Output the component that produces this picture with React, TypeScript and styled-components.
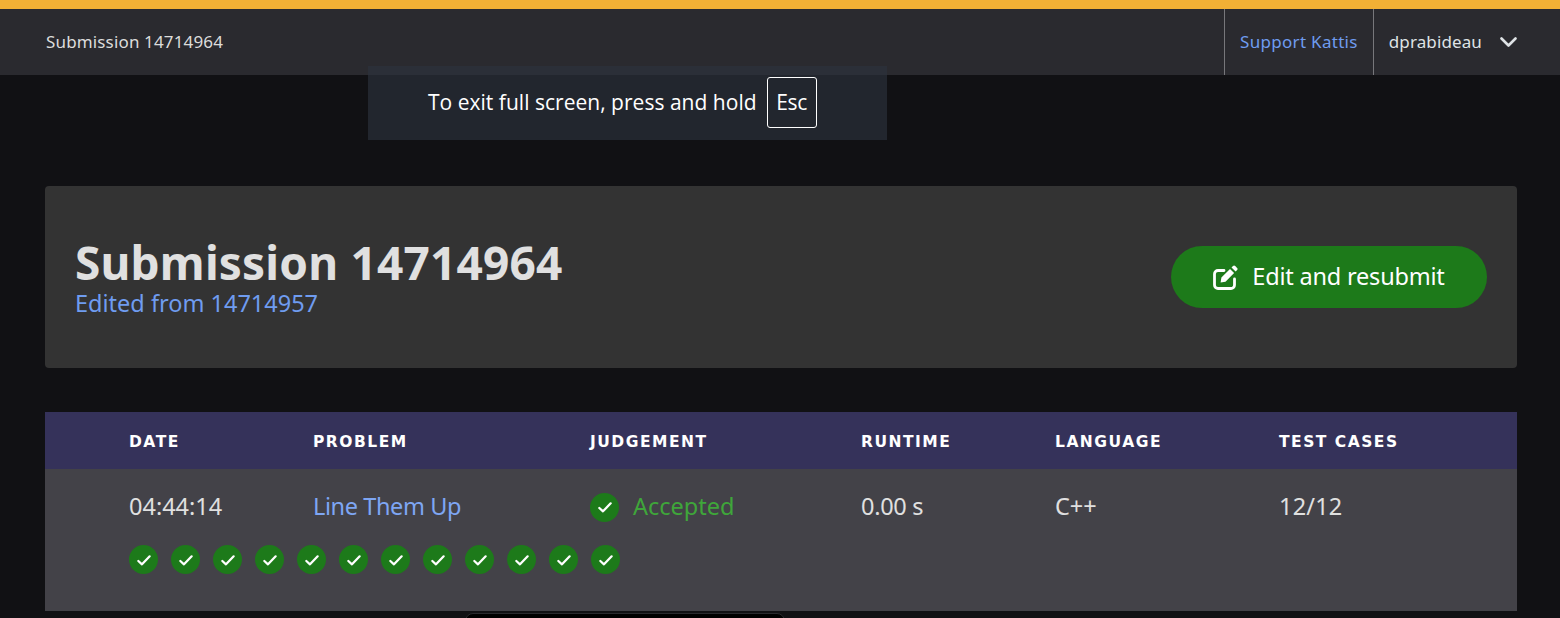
import React from "react";
import styled, { createGlobalStyle } from "styled-components";

const Global = createGlobalStyle`
  html, body { margin: 0; padding: 0; background: #111114; height: 618px; overflow: hidden; }
  #root { height: 618px; }
  * { box-sizing: border-box; }
`;

const Page = styled.div`
  position: relative;
  height: 618px;
  overflow: hidden;
  font-family: "Noto Sans", "Open Sans", sans-serif;
  color: #e0e0e0;
  background: #111114;
`;
const TopStripe = styled.div`
  height: 9px;
  background: #f2b035;
`;
const Nav = styled.nav`
  height: 66px;
  background: #2a2a2f;
  display: flex;
  align-items: center;
  justify-content: space-between;
  padding-left: 46px;
`;
const Crumb = styled.span`
  font-size: 17px;
  letter-spacing: 0.15px;
  color: #dcdcdc;
  margin-top: -2px;
`;
const NavRight = styled.div`
  display: flex;
  height: 100%;
  margin-right: 43px;
`;
const NavItem = styled.div`
  display: flex;
  align-items: center;
  gap: 18px;
  padding: 0 15px;
  font-size: 17px;
  border-left: 1px solid #77777b;
  &:last-child { padding-right: 0; }
`;
const NavLink = styled.a`
  color: #6f9cf0;
  letter-spacing: 0.3px;
  margin-top: -2px;
`;
const NavUser = styled.span`
  color: #dfe3e6;
  letter-spacing: 0.12px;
  margin-top: -2px;
`;
const Content = styled.main`
  padding: 111px 43px 0 45px;
`;
const Hero = styled.section`
  height: 182px;
  background: #333333;
  border-radius: 4px;
  display: flex;
  align-items: center;
  justify-content: space-between;
  padding: 0 30px;
`;
const HeroText = styled.div`
  display: flex;
  flex-direction: column;
`;
const Title = styled.h1`
  margin: 0;
  font-size: 46px;
  line-height: 50px;
  font-weight: 700;
  color: #e0e0e0;
  letter-spacing: 0.18px;
`;
const Subtitle = styled.a`
  margin-top: 2px;
  font-size: 23.5px;
  line-height: 28px;
  color: #6f9cf0;
`;
const ActionButton = styled.button`
  width: 316px;
  height: 62px;
  border: none;
  border-radius: 31px;
  background: #1d7a1a;
  color: #fff;
  font: inherit;
  font-size: 23.5px;
  letter-spacing: -0.2px;
  display: flex;
  align-items: center;
  justify-content: center;
  gap: 13px;
  padding: 0;
`;
const ButtonLabel = styled.span`
  margin-top: -2px;
`;
const Table = styled.section`
  margin-top: 44px;
`;
const Grid = styled.div`
  display: grid;
  grid-template-columns: 184px 277px 271px 194px 224px 1fr;
  padding-left: 84px;
`;
const HeadRow = styled(Grid)`
  height: 57px;
  padding-top: 2px;
  background: #35325a;
  align-items: center;
`;
const HeadCell = styled.div`
  font-family: "DejaVu Sans", "Noto Sans", sans-serif;
  font-size: 15.5px;
  font-weight: 700;
  letter-spacing: 1.5px;
  color: #fff;
`;
const Body = styled.div`
  height: 142px;
  background: #434248;
`;
const DataRow = styled(Grid)`
  height: 76px;
  align-items: center;
`;
const Cell = styled.div`
  font-size: 23.5px;
  color: #e0e0e0;
  display: flex;
  align-items: center;
  gap: 14px;
`;
const Value = styled.span<{ $spacing?: number }>`
  margin-top: -2px;
  letter-spacing: ${(p) => p.$spacing ?? 0}px;
`;
const ProblemLink = styled.a`
  color: #7ea6f4;
  letter-spacing: -0.4px;
  margin-top: -2px;
`;
const Accepted = styled.span`
  color: #3fa63a;
  margin-top: -2px;
`;
const Dots = styled.div`
  display: flex;
  gap: 13px;
  padding-left: 84px;
`;
const Dot = styled.span`
  width: 29px;
  height: 29px;
  border-radius: 50%;
  background: #1d7a1a;
  display: flex;
  align-items: center;
  justify-content: center;
  flex: none;
`;
const Toast = styled.div`
  position: absolute;
  left: 368px;
  top: 66px;
  width: 519px;
  height: 74px;
  background: rgba(44, 50, 61, 0.64);
  display: flex;
  align-items: center;
  gap: 10px;
  padding-left: 60px;
  font-family: "Open Sans", "Noto Sans", sans-serif;
  font-size: 21px;
  letter-spacing: 0.02px;
  color: #fff;
`;
const ToastText = styled.span`
  margin-top: -2px;
`;
const Key = styled.span`
  height: 51px;
  width: 50px;
  margin-top: -2px;
  border: 1px solid #fff;
  border-radius: 3px;
  display: flex;
  align-items: center;
  justify-content: center;
  letter-spacing: -0.3px;
`;
const Peek = styled.div`
  position: absolute;
  left: 465px;
  top: 613px;
  width: 320px;
  height: 20px;
  background: #000;
  border-radius: 8px 8px 0 0;
  border: 1px solid #2a2a2e;
`;

const Check = () => (
  <svg width="16" height="16" viewBox="0 0 24 24" fill="none" stroke="#fff" strokeWidth="3.4" strokeLinecap="round" strokeLinejoin="round">
    <path d="M3.5 13.5 9 18.5 20.5 6.5" />
  </svg>
);
const EditIcon = () => (
  <svg width="26" height="25" viewBox="0 0 26 25" fill="none">
    <path d="M11 5.5H5A3.5 3.5 0 0 0 1.5 9v11A3.5 3.5 0 0 0 5 23.5h13a3.5 3.5 0 0 0 3.5-3.5v-6" stroke="#fff" strokeWidth="2.8" strokeLinecap="round" />
    <path d="M20 1a1.6 1.6 0 0 1 2.2 0l1.9 1.9a1.6 1.6 0 0 1 0 2.2l-1.5 1.5-4.1-4.1zM17 4l4.1 4.1-8.6 8.6-4.9.8.8-4.9z" fill="#fff" />
  </svg>
);
const Chevron = () => (
  <svg width="17" height="10" viewBox="0 0 17 10" fill="none" stroke="#dfe3e6" strokeWidth="2.6" strokeLinecap="round" strokeLinejoin="round">
    <path d="M1.5 1.5 8.5 8.5 15.5 1.5" />
  </svg>
);

const heads = ["DATE", "PROBLEM", "JUDGEMENT", "RUNTIME", "LANGUAGE", "TEST CASES"];

export default function App() {
  return (
    <Page>
      <Global />
      <TopStripe />
      <Nav>
        <Crumb>Submission 14714964</Crumb>
        <NavRight>
          <NavItem><NavLink>Support Kattis</NavLink></NavItem>
          <NavItem><NavUser>dprabideau</NavUser><Chevron /></NavItem>
        </NavRight>
      </Nav>
      <Content>
        <Hero>
          <HeroText>
            <Title>Submission 14714964</Title>
            <Subtitle>Edited from 14714957</Subtitle>
          </HeroText>
          <ActionButton><EditIcon /><ButtonLabel>Edit and resubmit</ButtonLabel></ActionButton>
        </Hero>
        <Table>
          <HeadRow>
            {heads.map((h) => <HeadCell key={h}>{h}</HeadCell>)}
          </HeadRow>
          <Body>
            <DataRow>
              <Cell><Value>04:44:14</Value></Cell>
              <Cell><ProblemLink>Line Them Up</ProblemLink></Cell>
              <Cell><Dot><Check /></Dot><Accepted>Accepted</Accepted></Cell>
              <Cell><Value $spacing={-0.3}>0.00 s</Value></Cell>
              <Cell><Value>C++</Value></Cell>
              <Cell><Value $spacing={0.2}>12/12</Value></Cell>
            </DataRow>
            <Dots>
              {Array.from({ length: 12 }, (_, i) => <Dot key={i}><Check /></Dot>)}
            </Dots>
          </Body>
        </Table>
      </Content>
      <Toast><ToastText>To exit full screen, press and hold</ToastText><Key>Esc</Key></Toast>
      <Peek />
    </Page>
  );
}
